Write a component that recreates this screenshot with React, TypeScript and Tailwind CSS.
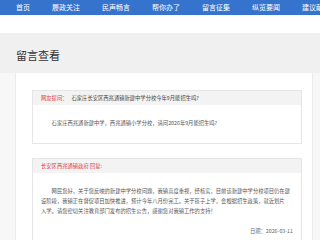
import React from "react";

const navItems = ["首页", "履政关注", "民声畅言", "帮你办了", "留言征集", "纵览要闻", "建议献策"];

const replyLines = [
  "网民您好，关于您反映的新建中学分校问题，我镇高度重视，经核实，目前该新建中学分校项目仍在建",
  "设阶段，我镇正在督促项目加快推进，预计今年八月份完工。关于孩子上学，会根据招生政策，就近划片",
  "入学。请您密切关注教育部门发布的招生公告，感谢您对我镇工作的支持！",
];

export default function App() {
  return (
    <div className="w-[320px] h-[240px] overflow-hidden bg-[#f7f7f7] font-['Noto_Sans_CJK_SC','Noto_Sans',sans-serif]">
      <nav className="h-[15px] bg-[#3673cc] flex items-center pl-[16px] gap-[22px] whitespace-nowrap overflow-hidden">
        {navItems.map((t) => (
          <span key={t} className="text-[7px] leading-[7px] text-white shrink-0">
            {t}
          </span>
        ))}
      </nav>
      <div className="h-[18px] bg-white" />
      <div className="h-[40px] bg-[#f0f0f0] flex items-center pl-[16px] pt-[4px]">
        <h1 className="text-[11px] leading-[11px] text-[#333]">留言查看</h1>
      </div>
      <div className="pl-[15px] pr-[7px]">
        <div className="bg-white border-x border-[#ebebeb] pl-[16px] pr-[10px] pt-[17px] pb-[20px]">
          <div className="border border-[#e6e6e6]">
            <div className="h-[14px] bg-[#f3f3f3] flex items-center px-[8px] text-[5.3px] leading-[6px] whitespace-nowrap">
              <span className="text-[#e23a3a]">网友提问：</span>
              <span className="text-[#444] ml-[4px]">石家庄长安区西兆通镇新建中学分校今年9月能招生吗?</span>
            </div>
            <p className="px-[8px] pt-[13px] pb-[15px] text-[5.3px] leading-[10px] text-[#555] indent-[2em]">
              石家庄西兆通新建中学，西兆通镇小学分校，请问2026年9月能招生吗?
            </p>
          </div>
          <div className="border border-[#e6e6e6] mt-[14px]">
            <div className="h-[14px] bg-[#f3f3f3] flex items-center px-[8px] text-[5.3px] leading-[6px] whitespace-nowrap text-[#e23a3a]">
              长安区西兆通镇政府 回复:
            </div>
            <div className="px-[8px] pt-[13px] pb-[10px]">
              <p className="text-[5.3px] leading-[10px] text-[#555] whitespace-nowrap">
                {replyLines.map((l, i) => (
                  <span key={i} className={i === 0 ? "block pl-[2em]" : "block"}>
                    {l}
                  </span>
                ))}
              </p>
              <div className="mt-[10px] text-right text-[5.3px] leading-[10px] text-[#666]">日期：2026-03-11</div>
            </div>
          </div>
        </div>
      </div>
    </div>
  );
}
